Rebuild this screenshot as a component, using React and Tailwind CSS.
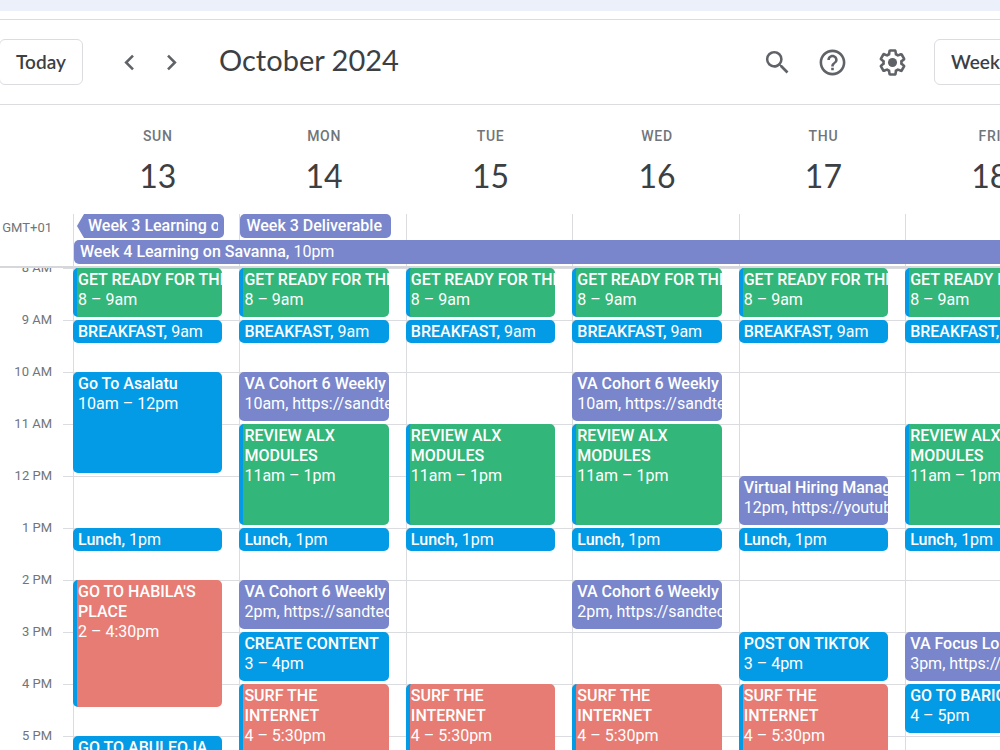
import {
  MdChevronLeft,
  MdChevronRight,
  MdHelpOutline,
  MdSearch,
} from "react-icons/md";
import clsx from "clsx";

const DAYS = [
  { name: "SUN", date: 13 },
  { name: "MON", date: 14 },
  { name: "TUE", date: 15 },
  { name: "WED", date: 16 },
  { name: "THU", date: 17 },
  { name: "FRI", date: 18 },
  { name: "SAT", date: 19 },
];

const HOURS = [
  "8 AM",
  "9 AM",
  "10 AM",
  "11 AM",
  "12 PM",
  "1 PM",
  "2 PM",
  "3 PM",
  "4 PM",
  "5 PM",
];

const FIRST_HOUR = 8;

const COLORS = {
  blue: "bg-[#039be5] pl-[5px]",
  purple: "bg-[#7986cb] pl-[5px]",
  green: "bg-[#33b679] border-l-4 border-[#039be5] pl-px",
  red: "bg-[#e67c73] border-l-4 border-[#039be5] pl-px",
};

const everyDay = (event) => [0, 1, 2, 3, 4, 5].map((day) => ({ ...event, day }));

const EVENTS = [
  ...everyDay({ start: 8, end: 9, color: "green", title: "GET READY FOR THE DAY", time: "8 – 9am" }),
  ...everyDay({ start: 9, end: 9.5, color: "blue", title: "BREAKFAST", time: "9am" }),
  ...everyDay({ start: 13, end: 13.5, color: "blue", title: "Lunch", time: "1pm" }),

  { day: 0, start: 10, end: 12, color: "blue", title: "Go To Asalatu", time: "10am – 12pm", wrap: true },
  { day: 0, start: 14, end: 16.5, color: "red", title: "GO TO HABILA'S PLACE", time: "2 – 4:30pm", wrap: true },
  { day: 0, start: 17, end: 18, color: "blue", title: "GO TO ABULEOJA", time: "5 – 6pm" },

  { day: 1, start: 10, end: 11, color: "purple", title: "VA Cohort 6 Weekly", time: "10am, https://sandtech.zoom.us" },
  { day: 1, start: 11, end: 13, color: "green", title: "REVIEW ALX MODULES", time: "11am – 1pm", wrap: true },
  { day: 1, start: 14, end: 15, color: "purple", title: "VA Cohort 6 Weekly", time: "2pm, https://sandtech.zoom.us" },
  { day: 1, start: 15, end: 16, color: "blue", title: "CREATE CONTENT", time: "3 – 4pm" },
  { day: 1, start: 16, end: 17.5, color: "red", title: "SURF THE INTERNET", time: "4 – 5:30pm", wrap: true },

  { day: 2, start: 11, end: 13, color: "green", title: "REVIEW ALX MODULES", time: "11am – 1pm", wrap: true },
  { day: 2, start: 16, end: 17.5, color: "red", title: "SURF THE INTERNET", time: "4 – 5:30pm", wrap: true },

  { day: 3, start: 10, end: 11, color: "purple", title: "VA Cohort 6 Weekly", time: "10am, https://sandtech.zoom.us" },
  { day: 3, start: 11, end: 13, color: "green", title: "REVIEW ALX MODULES", time: "11am – 1pm", wrap: true },
  { day: 3, start: 14, end: 15, color: "purple", title: "VA Cohort 6 Weekly", time: "2pm, https://sandtech.zoom.us" },
  { day: 3, start: 16, end: 17.5, color: "red", title: "SURF THE INTERNET", time: "4 – 5:30pm", wrap: true },

  { day: 4, start: 12, end: 13, color: "purple", title: "Virtual Hiring Managers", time: "12pm, https://youtube.com" },
  { day: 4, start: 15, end: 16, color: "blue", title: "POST ON TIKTOK", time: "3 – 4pm" },
  { day: 4, start: 16, end: 17.5, color: "red", title: "SURF THE INTERNET", time: "4 – 5:30pm", wrap: true },

  { day: 5, start: 11, end: 13, color: "green", title: "REVIEW ALX MODULES", time: "11am – 1pm", wrap: true },
  { day: 5, start: 15, end: 16, color: "purple", title: "VA Focus Lounge", time: "3pm, https://sandtech.zoom.us" },
  { day: 5, start: 16, end: 17, color: "blue", title: "GO TO BARIGA", time: "4 – 5pm" },
];

const SettingsIcon = () => (
  <svg width="31" height="31" viewBox="0 0 24 24" fill="currentColor" aria-hidden="true">
    <path d="M13.85 22.25h-3.7c-.74 0-1.36-.54-1.45-1.27l-.27-1.89c-.27-.14-.53-.29-.79-.46l-1.8.72c-.7.26-1.47-.03-1.81-.65L2.2 15.53c-.35-.66-.2-1.44.36-1.88l1.53-1.19c-.01-.15-.02-.3-.02-.46 0-.15.01-.31.02-.46l-1.52-1.19c-.59-.45-.74-1.26-.37-1.88l1.85-3.19c.34-.62 1.11-.9 1.79-.63l1.81.73c.26-.17.52-.32.78-.46l.27-1.91c.09-.7.71-1.25 1.44-1.25h3.7c.74 0 1.36.54 1.45 1.27l.27 1.89c.27.14.53.29.79.46l1.8-.72c.71-.26 1.48.03 1.82.65l1.84 3.18c.36.66.2 1.44-.36 1.88l-1.52 1.19c.01.15.02.3.02.46s-.01.31-.02.46l1.52 1.19c.56.45.72 1.23.37 1.86l-1.86 3.22c-.34.62-1.11.9-1.8.63l-1.8-.72c-.26.17-.52.32-.78.46l-.27 1.91c-.1.68-.72 1.22-1.46 1.22zm-3.23-2h2.76l.37-2.55.53-.22c.44-.18.88-.44 1.34-.78l.45-.34 2.38.96 1.38-2.4-2.03-1.58.07-.56c.03-.26.06-.51.06-.78s-.03-.53-.06-.78l-.07-.56 2.03-1.58-1.39-2.4-2.39.96-.45-.35c-.42-.32-.87-.58-1.33-.77l-.52-.22-.37-2.55h-2.76l-.37 2.55-.53.21c-.44.19-.88.44-1.34.79l-.45.33-2.38-.95-1.39 2.39 2.03 1.58-.07.56a7 7 0 0 0-.06.79c0 .26.02.53.06.78l.07.56-2.03 1.58 1.38 2.4 2.39-.96.45.35c.43.33.86.58 1.33.77l.53.22.38 2.55z" />
    <circle cx="12" cy="12" r="3.5" />
  </svg>
);

const Header = () => (
  <header className="flex h-[84px] shrink-0 items-center text-[#5f6368]">
    <button className="-ml-px h-[46px] w-[84px] shrink-0 rounded-md border border-[#dadce0] font-['Lato',sans-serif] text-[19px] font-semibold text-[#3c4043]">
      Today
    </button>
    <div className="ml-[31px] flex gap-[11px]">
      <button aria-label="Previous week">
        <MdChevronLeft size={31} />
      </button>
      <button aria-label="Next week">
        <MdChevronRight size={31} />
      </button>
    </div>
    <h1 className="ml-8 grow pb-1 whitespace-nowrap font-['Lato',sans-serif] text-[29px] text-[#3c4043]">
      October 2024
    </h1>
    <div className="flex shrink-0 items-center">
      <button aria-label="Search">
        <MdSearch size={31} />
      </button>
      <button aria-label="Support" className="ml-6">
        <MdHelpOutline size={31} />
      </button>
      <button aria-label="Settings menu" className="ml-[29px]">
        <SettingsIcon />
      </button>
      <button className="-mr-12 ml-[26px] h-[46px] w-[114px] rounded-md border border-[#dadce0] pl-4 text-left font-['Lato',sans-serif] text-[19px] font-semibold text-[#3c4043]">
        Week
      </button>
    </div>
  </header>
);

const DayNames = () => (
  <div className="grid grid-cols-[73px_repeat(7,minmax(0,1fr))] pt-[21px] pb-4">
    {DAYS.map((day, i) => (
      <div
        key={day.name}
        className={clsx("flex flex-col items-center pl-[3px]", i === 0 && "col-start-2")}
      >
        <span className="text-[14px] leading-5 font-medium tracking-wider text-[#70757a]">
          {day.name}
        </span>
        <span className="mt-2 font-['Lato',sans-serif] text-[32px] leading-[44px] text-[#3c4043]">
          {day.date}
        </span>
      </div>
    ))}
  </div>
);

const AllDay = () => (
  <div className="grid grid-cols-[73px_repeat(7,minmax(0,1fr))] grid-rows-[24px_24px_0px] gap-y-[2px] border-b-2 border-[#d5d7da] text-[16px] leading-6 text-white">
    <span className="col-start-1 row-start-1 pr-[21px] text-right text-[13px] leading-7 text-[#70757a]">
      GMT+01
    </span>
    {DAYS.map((day, i) => (
      <div
        key={day.name}
        className="row-span-full border-l border-[#dadce0]"
        style={{ gridColumn: i + 2 }}
      />
    ))}
    <button className="col-start-2 row-start-1 mr-[15px] ml-1 flex rounded-[5px] bg-[#7986cb] pr-[6px] pl-[11px] font-medium [clip-path:polygon(7px_0,100%_0,100%_100%,7px_100%,0_50%)]">
      <span className="overflow-hidden whitespace-nowrap">Week 3 Learning on Savanna</span>
    </button>
    <button className="col-start-3 row-start-1 mr-[15px] ml-px flex rounded-[5px] bg-[#7986cb] px-[6px] font-medium">
      <span className="overflow-hidden whitespace-nowrap">Week 3 Deliverable (Milestone)</span>
    </button>
    <button className="col-start-2 col-end-9 row-start-2 ml-px rounded-[5px] bg-[#7986cb] pl-[6px] text-left">
      <span className="font-medium">Week 4 Learning on Savanna,</span> 10pm
    </button>
  </div>
);

const Event = ({ event }) => {
  const { day, start, end, color, title, time, wrap } = event;
  const short = end - start < 1;
  const row = (start - FIRST_HOUR) * 2 + 1;

  return (
    <button
      className={clsx(
        "mr-[17px] mb-[3px] flex flex-col overflow-hidden rounded-[5px] pt-[2px] text-left text-[16px] leading-5 text-white",
        !wrap && "whitespace-nowrap",
        COLORS[color]
      )}
      style={{
        gridColumn: day + 3,
        gridRow: `${row} / span ${(end - start) * 2}`,
      }}
    >
      {short ? (
        <span>
          <span className="font-medium">{title},</span> {time}
        </span>
      ) : (
        <>
          <span className="font-medium">{title}</span>
          <span className="whitespace-nowrap">{time}</span>
        </>
      )}
    </button>
  );
};

// two 26px rows per hour; lines, day borders and events share the same grid
const WeekGrid = () => (
  <div className="min-h-0 grow overflow-hidden">
    <div className="grid auto-rows-[26px] grid-cols-[63px_10px_repeat(7,minmax(0,1fr))]">
      {HOURS.map((hour, i) => (
        <div
          key={hour}
          className="col-start-2 col-end-10 border-t border-[#dadce0]"
          style={{ gridRow: `${i * 2 + 1} / span 2` }}
        />
      ))}
      {HOURS.map((hour, i) => (
        <span
          key={hour}
          className="col-start-1 -mt-[10px] pr-[11px] text-right text-[13px] leading-5 text-[#70757a]"
          style={{ gridRow: i * 2 + 1 }}
        >
          {hour}
        </span>
      ))}
      {DAYS.map((day, i) => (
        <div
          key={day.name}
          className="border-l border-[#dadce0]"
          style={{ gridColumn: i + 3, gridRow: "1 / span 20" }}
        />
      ))}
      {EVENTS.map((event) => (
        <Event key={`${event.day}-${event.start}`} event={event} />
      ))}
    </div>
  </div>
);

export default function App() {
  return (
    <div className="flex h-screen flex-col overflow-hidden bg-white font-['Roboto',sans-serif]">
      <div className="h-[11px] shrink-0 bg-[#ecf0fa]" />
      <div className="h-2 shrink-0" />
      <div className="shrink-0 border-y border-[#dadce0]">
        <Header />
      </div>
      <main className="flex min-h-0 w-[123.8%] grow flex-col">
        <DayNames />
        <AllDay />
        <WeekGrid />
      </main>
    </div>
  );
}
